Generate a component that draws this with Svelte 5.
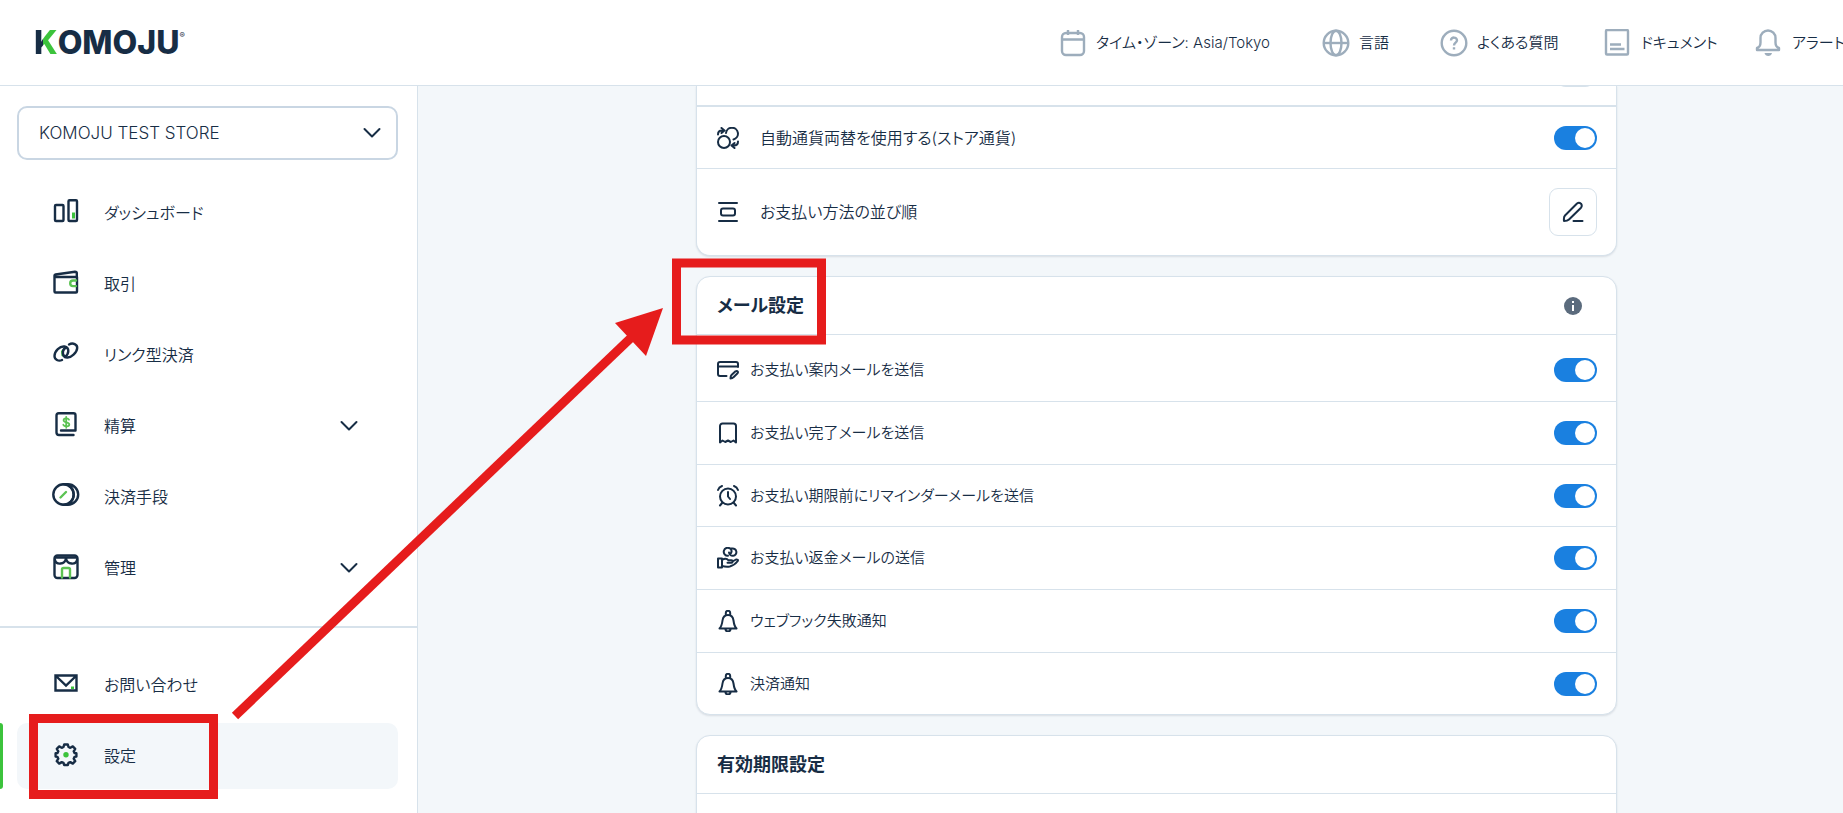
<script>
  const menu = [
    { id: 'dashboard', label: 'ダッシュボード' },
    { id: 'wallet', label: '取引' },
    { id: 'link', label: 'リンク型決済' },
    { id: 'settlement', label: '精算', children: true },
    { id: 'coins', label: '決済手段' },
    { id: 'store', label: '管理', children: true },
  ];

  const subMenu = [
    { id: 'mail', label: 'お問い合わせ' },
    { id: 'gear', label: '設定', active: true },
  ];

  const topLinks = [
    { id: 'calendar', label: 'タイム・ゾーン: Asia/Tokyo' },
    { id: 'globe', label: '言語' },
    { id: 'help', label: 'よくある質問' },
    { id: 'doc', label: 'ドキュメント', wide: true },
    { id: 'alert', label: 'アラート', wide: true },
  ];

  let autoExchange = $state(true);

  let mailSettings = $state([
    { id: 'card-edit', label: 'お支払い案内メールを送信', on: true },
    { id: 'receipt', label: 'お支払い完了メールを送信', on: true },
    { id: 'alarm', label: 'お支払い期限前にリマインダーメールを送信', on: true },
    { id: 'hand', label: 'お支払い返金メールの送信', on: true },
    { id: 'bell', label: 'ウェブフック失敗通知', on: true },
    { id: 'bell', label: '決済通知', on: true },
  ]);
</script>

{#snippet chevron()}
  <svg class="chevron" viewBox="0 0 18 12" aria-hidden="true">
    <path d="M1.5 2 9 9.5 16.5 2" />
  </svg>
{/snippet}

{#snippet menuIcon(id)}
  <svg class="menu-icon" viewBox="0 0 28 28" aria-hidden="true">
    {#if id === 'dashboard'}
      <rect x="3" y="6" width="8.500" height="16" rx="1" />
      <rect x="16.500" y="1.200" width="8.500" height="20.800" rx="1" />
      <path class="green-fill" d="M20 13.500h3v6h-3z" />
    {:else if id === 'wallet'}
      <path d="M2.500 5.500v16a1 1 0 0 0 1 1h20.500a1 1 0 0 0 1-1V7H3.500c-1.300 0-1.300-2.300 0-2.500L23 1.800q1.800 0 1.800 1.500V7" />
      <path class="green" d="M24 10.500h-3a2.800 2.800 0 0 0 0 5.600h3" />
    {:else if id === 'link'}
      <path class="green-fill" d="M12 7v9l-2.500-1-.5-5z" />
      <path d="M10 19c-3.500 1.800-7.500-.5-7.500-4C2.500 10 8 4.800 12.500 5.500c5.500 1.200 4.500 7.500.5 10.500" />
      <path d="M17 3.500c4-2.300 8.500 0 8.200 3.500C25 11.500 19 17 15 16.500c-5-.8-5.500-6.500-1.500-10" />
    {:else if id === 'settlement'}
      <path d="M23.500 18.500H9M21.500 23H7a2.500 2.500 0 0 1-2.500-2.500V3.500A2.300 2.300 0 0 1 6.800 1.200h14.700A2 2 0 0 1 23.500 3.200v15.300" />
      <path class="green thin" d="M17 7.700c-1-1.900-5.400-1.900-5.400.6 0 2.800 5.700 1.400 5.700 4.100 0 2.500-4.900 2.600-6 .4M14.200 4.800v11" />
    {:else if id === 'coins'}
      <circle cx="11.500" cy="11.500" r="10.200" />
      <path d="M11.500 1.300h4.500a10.200 10.200 0 0 1 0 20.400h-4.500M17 2.500a11 11 0 0 1 0 18" />
      <path class="green" d="m8.500 14.500 5.500-5.500" />
    {:else if id === 'store'}
      <rect x="2.500" y="1.500" width="23" height="22.500" rx="3" />
      <path d="M3 6c1 5 9.800 5 11-1.500 1.200 6.500 10 6.500 11 1.500M3.500 3.500h21" />
      <path class="green" d="M10 23.500v-8a1.500 1.500 0 0 1 1.500-1.500h5a1.500 1.500 0 0 1 1.500 1.500v8" />
    {:else if id === 'mail'}
      <path d="M3.500 4.500h21v15h-21zM4 5l10 9.500L24 5" class="square" />
      <path class="green-fill" d="M19 15.500h3v2.500h-3z" />
    {:else if id === 'gear'}
      <path d="M11.500 5 12.200 2.500h3.600l.7 2.500 1.800.8 2.500-1.400 2.400 2.400-1.500 2.500.8 1.700 1.900.3v3.200l-1.900.4-.8 1.800 1.500 2.500-2.400 2.400-2.500-1.500-1.800.8-.7 2.100h-3.600l-.7-2.100-1.800-.8-2.500 1.500-2.400-2.400 1.500-2.500-.8-1.800-1.900-.4v-3.200l1.900-.3.8-1.700-1.500-2.500 2.400-2.400 2.500 1.400z" />
      <circle class="green-fill" cx="14" cy="12.800" r="2.700" />
    {/if}
  </svg>
{/snippet}

{#snippet topIcon(id)}
  <svg class="top-icon" viewBox="0 0 28 28" aria-hidden="true">
    {#if id === 'calendar'}
      <rect x="3" y="4" width="22" height="22" rx="4" />
      <path d="M3 10.500h22M9 1v5M19 1v5" />
    {:else if id === 'globe'}
      <circle cx="14" cy="14" r="12.300" />
      <ellipse cx="14" cy="14" rx="5.500" ry="12.300" />
      <path d="M1.500 14h25" />
    {:else if id === 'help'}
      <circle cx="14" cy="14" r="12.300" />
      <path d="M11 11.500c0-4 6.200-3.800 6 0-.2 2.200-3 2.300-3 5M14 18.200v2.200" />
    {:else if id === 'doc'}
      <rect x="3" y="1" width="22" height="24.500" rx="1" />
      <path d="M7 15.500h11M7 20h14.500" />
    {:else}
      <path d="M3 21v-2q3.500-1 3.500-5.500V9a7.500 7.500 0 0 1 15 0v4.500q0 4.500 3.500 5.500v2z" />
      <path class="grey-fill" d="M10.500 24h7.500c-.6 4-6.900 4-7.500 0z" />
    {/if}
  </svg>
{/snippet}

{#snippet rowIcon(id)}
  <svg class="row-icon" viewBox="0 0 22 22" aria-hidden="true">
    {#if id === 'exchange'}
      <circle cx="7" cy="15" r="6" />
      <path d="M9 6A6 6 0 1 1 16.500 12.500M1 7.500Q1 3.500 5 3.500M4.500 1l3 2.500-3 2.500M21 14.500q0 4-4 4M17.500 16l-3 2.500 3 2.500" />
    {:else if id === 'order'}
      <path d="M2 2h18M2 20h18" />
      <rect x="4" y="7.500" width="14" height="7" rx="2" />
    {:else if id === 'card-edit'}
      <path d="M9.500 17H3a2 2 0 0 1-2-2V5a2 2 0 0 1 2-2h16a2 2 0 0 1 2 2v3M1 7.500h20" />
      <path d="M13.500 19.500q0-2.500 1-3.500l4-3.700q1.500-.8 2.300.3.500 1-.5 1.900l-3.800 3.700q-1 1.300-3 1.300z" />
    {:else if id === 'receipt'}
      <path d="M3 20.500V4a2.500 2.500 0 0 1 2.500-2.500h11A2.500 2.500 0 0 1 19 4v16.500l-2.500-2-2.700 1.500-2.800-1.500L8.200 20l-2.700-1.500z" />
    {:else if id === 'alarm'}
      <circle cx="11" cy="11.500" r="8" />
      <path d="M11 7v4.500l2 2.500M1 5q1-3 4-4M21 5q-1-3-4-4M5.500 17.500 3 20.500M16.500 17.500l2.500 3" />
    {:else if id === 'hand'}
      <path d="M13 1.500A4 4 0 1 0 11 8.800M12 5.500a3.700 3.700 0 1 0 3-4h-2q2.500 1.500 1 4.500" />
      <path d="M1 11.500h4v9H1zM5 13c3-2 5-1.500 6.500.3h3c1.500 0 1.500 2.500 0 2.500h-4M15.500 14.500l3.500-2q2.500-.3 1.800 1.500-3.500 4.500-8 5.500-4 .5-7.800-.5" />
    {:else}
      <path d="M2.500 18.500c2-2 2.500-4 3-8 .5-3.500 2.500-5.500 5.500-5.500s5 2 5.500 5.500c.5 4 1 6 3 8zM8.800 5V3a2.200 2.200 0 0 1 4.400 0v2M8.500 19.500c.5 2.500 4.500 2.500 5 0" />
    {/if}
  </svg>
{/snippet}

<div class="app">
  <header class="topbar">
    <a class="logo" href="#home" aria-label="KOMOJU"><span class="logo-k">K</span>OMOJU<small>®</small></a>
    <nav class="top-links">
      {#each topLinks as link}
        <a class="top-link" class:wide={link.wide} href="#{link.id}">
          {@render topIcon(link.id)}
          <span>{link.label}</span>
        </a>
      {/each}
    </nav>
  </header>

  <div class="layout">
    <aside class="sidebar">
      <div class="store-picker">
        <select aria-label="KOMOJU TEST STORE">
          <option>KOMOJU TEST STORE</option>
        </select>
        {@render chevron()}
      </div>
      <nav class="menu">
        {#each menu as item}
          <a class="menu-item" href="#{item.id}">
            {@render menuIcon(item.id)}
            <span class="menu-label">{item.label}</span>
            {#if item.children}{@render chevron()}{/if}
          </a>
        {/each}
      </nav>
      <hr />
      <nav class="menu">
        {#each subMenu as item}
          <a class="menu-item" class:active={item.active} href="#{item.id}">
            {@render menuIcon(item.id)}
            <span class="menu-label">{item.label}</span>
          </a>
        {/each}
      </nav>
    </aside>

    <main>
      <section class="card continued">
        <div class="row scrolled">
          <input class="switch" type="checkbox" role="switch" aria-label="通貨" />
        </div>
        <label class="row">
          {@render rowIcon('exchange')}
          <span class="row-label">自動通貨両替を使用する(ストア通貨)</span>
          <input class="switch" type="checkbox" role="switch" bind:checked={autoExchange} />
        </label>
        <div class="row tall">
          {@render rowIcon('order')}
          <span class="row-label">お支払い方法の並び順</span>
          <button class="edit" aria-label="編集">
            <svg class="row-icon" viewBox="0 0 22 22" aria-hidden="true">
              <path d="M2 20q-.5-4 1-5.500L15 2.500q2-1.500 4 .2 1.500 2 0 4L7 18.500Q5.500 20 2 20zM11.500 20h9" />
            </svg>
          </button>
        </div>
      </section>

      <section class="card">
        <div class="card-head">
          <h2>メール設定</h2>
          <button class="info" aria-label="情報">
            <svg viewBox="0 0 18 18" aria-hidden="true">
              <circle cx="9" cy="9" r="9" />
              <path d="M8 4h2v2H8zM8 8h2v6H8z" />
            </svg>
          </button>
        </div>
        <div class="mail-rows">
          {#each mailSettings as setting}
            <label class="row">
              {@render rowIcon(setting.id)}
              <span class="row-label">{setting.label}</span>
              <input class="switch" type="checkbox" role="switch" bind:checked={setting.on} />
            </label>
          {/each}
        </div>
      </section>

      <section class="card">
        <div class="card-head">
          <h2>有効期限設定</h2>
        </div>
        <div class="row"></div>
      </section>
    </main>
  </div>

  <!-- walkthrough marks: sidebar entry -> mail section -->
  <svg class="guide" aria-hidden="true">
    <rect x="33.500" y="718.500" width="180" height="76" />
    <rect x="676.500" y="263" width="145" height="77" />
    <path d="M235 716 636 333" />
    <path class="arrow-head" d="M663 308 615 323 646 356z" />
  </svg>
</div>

<style>
  :global(body) {
    overflow: hidden;
  }

  .app {
    position: relative;
    height: 100vh;
    display: flex;
    flex-direction: column;
    overflow: hidden;
    background: #f3f7fa;
    color: #172d45;
    font-family: Inter, 'Noto Sans CJK JP', sans-serif;
    font-size: 16px;
    line-height: 24px;
    font-weight: 350;
    font-feature-settings: 'palt';
  }

  .app *,
  .app *::before {
    box-sizing: border-box;
  }

  a {
    color: inherit;
    text-decoration: none;
  }

  svg {
    display: block;
    flex-shrink: 0;
    fill: none;
    stroke: #172d45;
    stroke-width: 2;
    stroke-linecap: round;
    stroke-linejoin: round;
  }

  /* top bar */
  .topbar {
    display: flex;
    align-items: center;
    justify-content: space-between;
    flex-shrink: 0;
    height: 86px;
    padding-left: 34px;
    background: #fff;
    border-bottom: 1px solid #d7e2eb;
  }

  .logo {
    display: flex;
    font-size: 32px;
    line-height: 32px;
    font-weight: 800;
  }

  .logo-k {
    background: linear-gradient(90deg, #172d45 36%, #3cc33c 36%);
    background-clip: text;
    color: transparent;
  }

  .logo small {
    font-size: 8px;
    line-height: 16px;
    font-weight: 400;
  }

  .top-links {
    display: grid;
    grid-template-columns: 263px 118px 163px 151px 89px;
    font-size: 15px;
  }

  .top-link {
    display: flex;
    align-items: center;
    gap: 9px;
    white-space: nowrap;
  }

  .top-link.wide {
    gap: 10px;
  }

  .top-icon {
    width: 28px;
    height: 28px;
    stroke: #9dadbc;
    stroke-width: 2.4;
    stroke-linecap: butt;
  }

  .grey-fill {
    fill: #9dadbc;
    stroke: none;
  }

  /* sidebar */
  .layout {
    display: flex;
    flex: 1;
    min-height: 0;
  }

  .sidebar {
    width: 418px;
    flex-shrink: 0;
    padding-top: 20px;
    background: #fff;
    border-right: 1px solid #d7e2eb;
  }

  .store-picker {
    display: grid;
    align-items: center;
    margin: 0 19px 20px 17px;
  }

  .store-picker > :global(*) {
    grid-area: 1 / 1;
  }

  .store-picker .chevron {
    justify-self: end;
    margin-right: 17px;
    pointer-events: none;
  }

  select {
    height: 54px;
    padding: 0 20px;
    appearance: none;
    border: 2px solid #c9d6e3;
    border-radius: 10px;
    background: #fff;
    color: inherit;
    font: inherit;
    font-size: 17px;
  }

  .chevron {
    width: 18px;
    height: 12px;
  }

  .menu {
    display: flex;
    flex-direction: column;
    gap: 5px;
  }

  .menu-item {
    position: relative;
    display: flex;
    align-items: center;
    gap: 24px;
    height: 66px;
    margin: 0 19px 0 17px;
    padding: 0 40px 0 35px;
    border-radius: 10px;
  }

  .menu-item.active {
    background: #f3f7fa;
  }

  .menu-item.active::before {
    content: '';
    position: absolute;
    left: -17px;
    width: 3px;
    height: 66px;
    border-radius: 0 3px 3px 0;
    background: #3cc33c;
  }

  .menu-icon {
    width: 28px;
    height: 28px;
    stroke-width: 2.4;
  }

  .menu-label {
    flex: 1;
  }

  .green {
    stroke: #5cc353;
  }

  .thin {
    stroke-width: 1.8;
  }

  .green-fill {
    fill: #3cc33c;
    stroke: none;
  }

  .square {
    stroke-linejoin: miter;
  }

  hr {
    height: 2px;
    margin: 25px 0 24px;
    border: 0;
    background: #d7e2eb;
  }

  /* settings cards */
  main {
    flex: 1;
    display: flex;
    flex-direction: column;
    gap: 20px;
    padding: 0 226px 0 278px;
    overflow: hidden;
  }

  .card {
    flex-shrink: 0;
    background: #fff;
    border: 1px solid #d7e2eb;
    border-radius: 14px;
    box-shadow: 0 1px 2px rgba(23, 45, 69, 0.12);
  }

  .card.continued {
    border-top: 0;
    border-radius: 0 0 14px 14px;
  }

  .continued .row {
    gap: 21px;
  }

  .card-head {
    display: flex;
    align-items: center;
    justify-content: space-between;
    height: 58px;
    padding: 0 34px 0 20px;
    border-bottom: 1px solid #d7e2eb;
  }

  h2 {
    margin: 0;
    font-size: 18px;
    line-height: 24px;
    font-weight: 700;
  }

  .info {
    padding: 0;
    border: 0;
    background: none;
  }

  .info svg {
    width: 18px;
    height: 18px;
    fill: #5b6b7d;
    stroke: none;
  }

  .info path {
    fill: #fff;
  }

  .mail-rows {
    padding-top: 4px;
    font-size: 15px;
  }

  .row {
    display: flex;
    align-items: center;
    gap: 11px;
    height: 63px;
    padding: 0 19px 0 20px;
    border-bottom: 1px solid #d7e2eb;
  }

  .row:last-child {
    border-bottom: 0;
  }

  .continued .row,
  .mail-rows .row:nth-child(3n) {
    height: 62px;
  }

  .mail-rows .row:last-child {
    height: 61px;
  }

  .continued .row.tall {
    height: 86px;
  }

  .continued .row.scrolled {
    align-items: flex-start;
    justify-content: flex-end;
    height: 21px;
    border-bottom-width: 2px;
  }

  .scrolled .switch {
    margin-top: -23px;
  }

  .row-label {
    flex: 1;
  }

  .row-icon {
    width: 22px;
    height: 22px;
  }

  .switch {
    appearance: none;
    display: flex;
    align-items: center;
    width: 43px;
    height: 24px;
    margin: 0;
    padding: 2px;
    border-radius: 12px;
    background: #d7e2eb;
  }

  .switch::before {
    content: '';
    width: 20px;
    height: 20px;
    border-radius: 50%;
    background: #fff;
  }

  .switch:checked {
    justify-content: flex-end;
    background: #1a80e0;
  }

  .edit {
    display: grid;
    place-items: center;
    width: 48px;
    height: 48px;
    padding: 0;
    border: 1px solid #d7e2eb;
    border-radius: 9px;
    background: #fff;
  }

  .guide {
    position: absolute;
    inset: 0;
    width: 100%;
    height: 100%;
    pointer-events: none;
    stroke: #e61c1c;
    stroke-width: 9;
    stroke-linecap: butt;
    stroke-linejoin: miter;
  }

  .arrow-head {
    fill: #e61c1c;
    stroke: none;
  }
</style>
